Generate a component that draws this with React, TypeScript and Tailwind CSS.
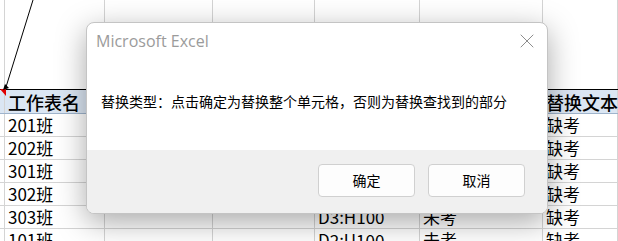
import { X } from 'lucide-react';

const cols = ['w-[5px]', 'w-[100px]', 'w-[108px]', 'w-[102px]', 'w-[105px]', 'w-[123px]', 'w-[75px]'];

const rows = [
  ['', '201班', '', '', 'D3:H100', '未考', '缺考'],
  ['', '202班', '', '', 'D3:H100', '未考', '缺考'],
  ['', '301班', '', '', 'D3:H100', '未考', '缺考'],
  ['', '302班', '', '', 'D3:H100', '未考', '缺考'],
  ['', '303班', '', '', 'D3:H100', '未考', '缺考'],
  ['', '101班', '', '', 'D2:U100', '未考', '缺考'],
];

const header = ['', '工作表名', '', '', '', '', '替换文本'];

function Cell({ i, text, className = '' }: { i: number; text: string; className?: string }) {
  return (
    <div className={`${cols[i]} shrink-0 border-r border-[#d4d4d4] pl-[3px] flex items-end whitespace-nowrap ${className}`}>
      <span className="leading-[22px]">{text}</span>
    </div>
  );
}

export default function App() {
  return (
    <div
      className="relative w-[618px] h-[241px] overflow-hidden bg-white text-black"
      style={{ fontFamily: '"Noto Sans CJK SC", "Noto Sans", sans-serif' }}
    >
      {/* sheet */}
      <div className="flex flex-col text-[17px]">
        <div className="flex h-[89px]">
          {cols.map((c, i) => (
            <div key={i} className={`${c} shrink-0 border-r border-[#d4d4d4]`} />
          ))}
        </div>
        <div className="flex h-[25px] border-t border-black border-b border-b-[#9fb4cc]">
          {header.map((t, i) => (
            <Cell key={i} i={i} text={t} className="bg-[#dbe6f3] text-[18px] font-medium" />
          ))}
        </div>
        {rows.map((r, ri) => (
          <div key={ri} className="flex h-[23px] border-b border-[#d4d4d4]">
            {r.map((t, i) => (
              <Cell key={i} i={i} text={t} />
            ))}
          </div>
        ))}
      </div>

      {/* comment arrow + indicator */}
      <svg className="absolute left-0 top-0" width="40" height="100" viewBox="0 0 40 100">
        <polygon points="0,89 6,89 6,96" fill="#e00000" />
        <line x1="33" y1="0" x2="6" y2="87" stroke="#000" strokeWidth="1" />
        <polygon points="3,90 9,88 5,84" fill="#000" />
      </svg>

      {/* dialog */}
      <div className="absolute left-[86px] top-[22px] w-[462px] rounded-[8px] border border-[#c4c4c4] bg-white overflow-hidden shadow-[0_8px_30px_rgba(0,0,0,0.34)]">
        <div className="h-[127px] relative">
          <div
            className="pl-[9px] pt-[8px] text-[16px] leading-[20px] text-[#9b9b9b]"
            style={{ fontFamily: '"Open Sans", "Noto Sans", sans-serif' }}
          >
            Microsoft Excel
          </div>
          <X className="absolute right-[8px] top-[6px] text-[#707070]" size={24} strokeWidth={0.8} />
          <div className="pl-[14px] pt-[40px] text-[14px] leading-[20px]">
            替换类型：点击确定为替换整个单元格，否则为替换查找到的部分
          </div>
        </div>
        <div className="h-[63px] bg-[#f0f0f0] flex justify-end items-start gap-[13px] pr-[22px] pt-[14px]">
          <button className="w-[97px] h-[33px] rounded-[4px] border border-[#d0d0d0] bg-[#fdfdfd] text-[14px]">
            确定
          </button>
          <button className="w-[97px] h-[33px] rounded-[4px] border border-[#d0d0d0] bg-[#fdfdfd] text-[14px]">
            取消
          </button>
        </div>
      </div>
    </div>
  );
}
